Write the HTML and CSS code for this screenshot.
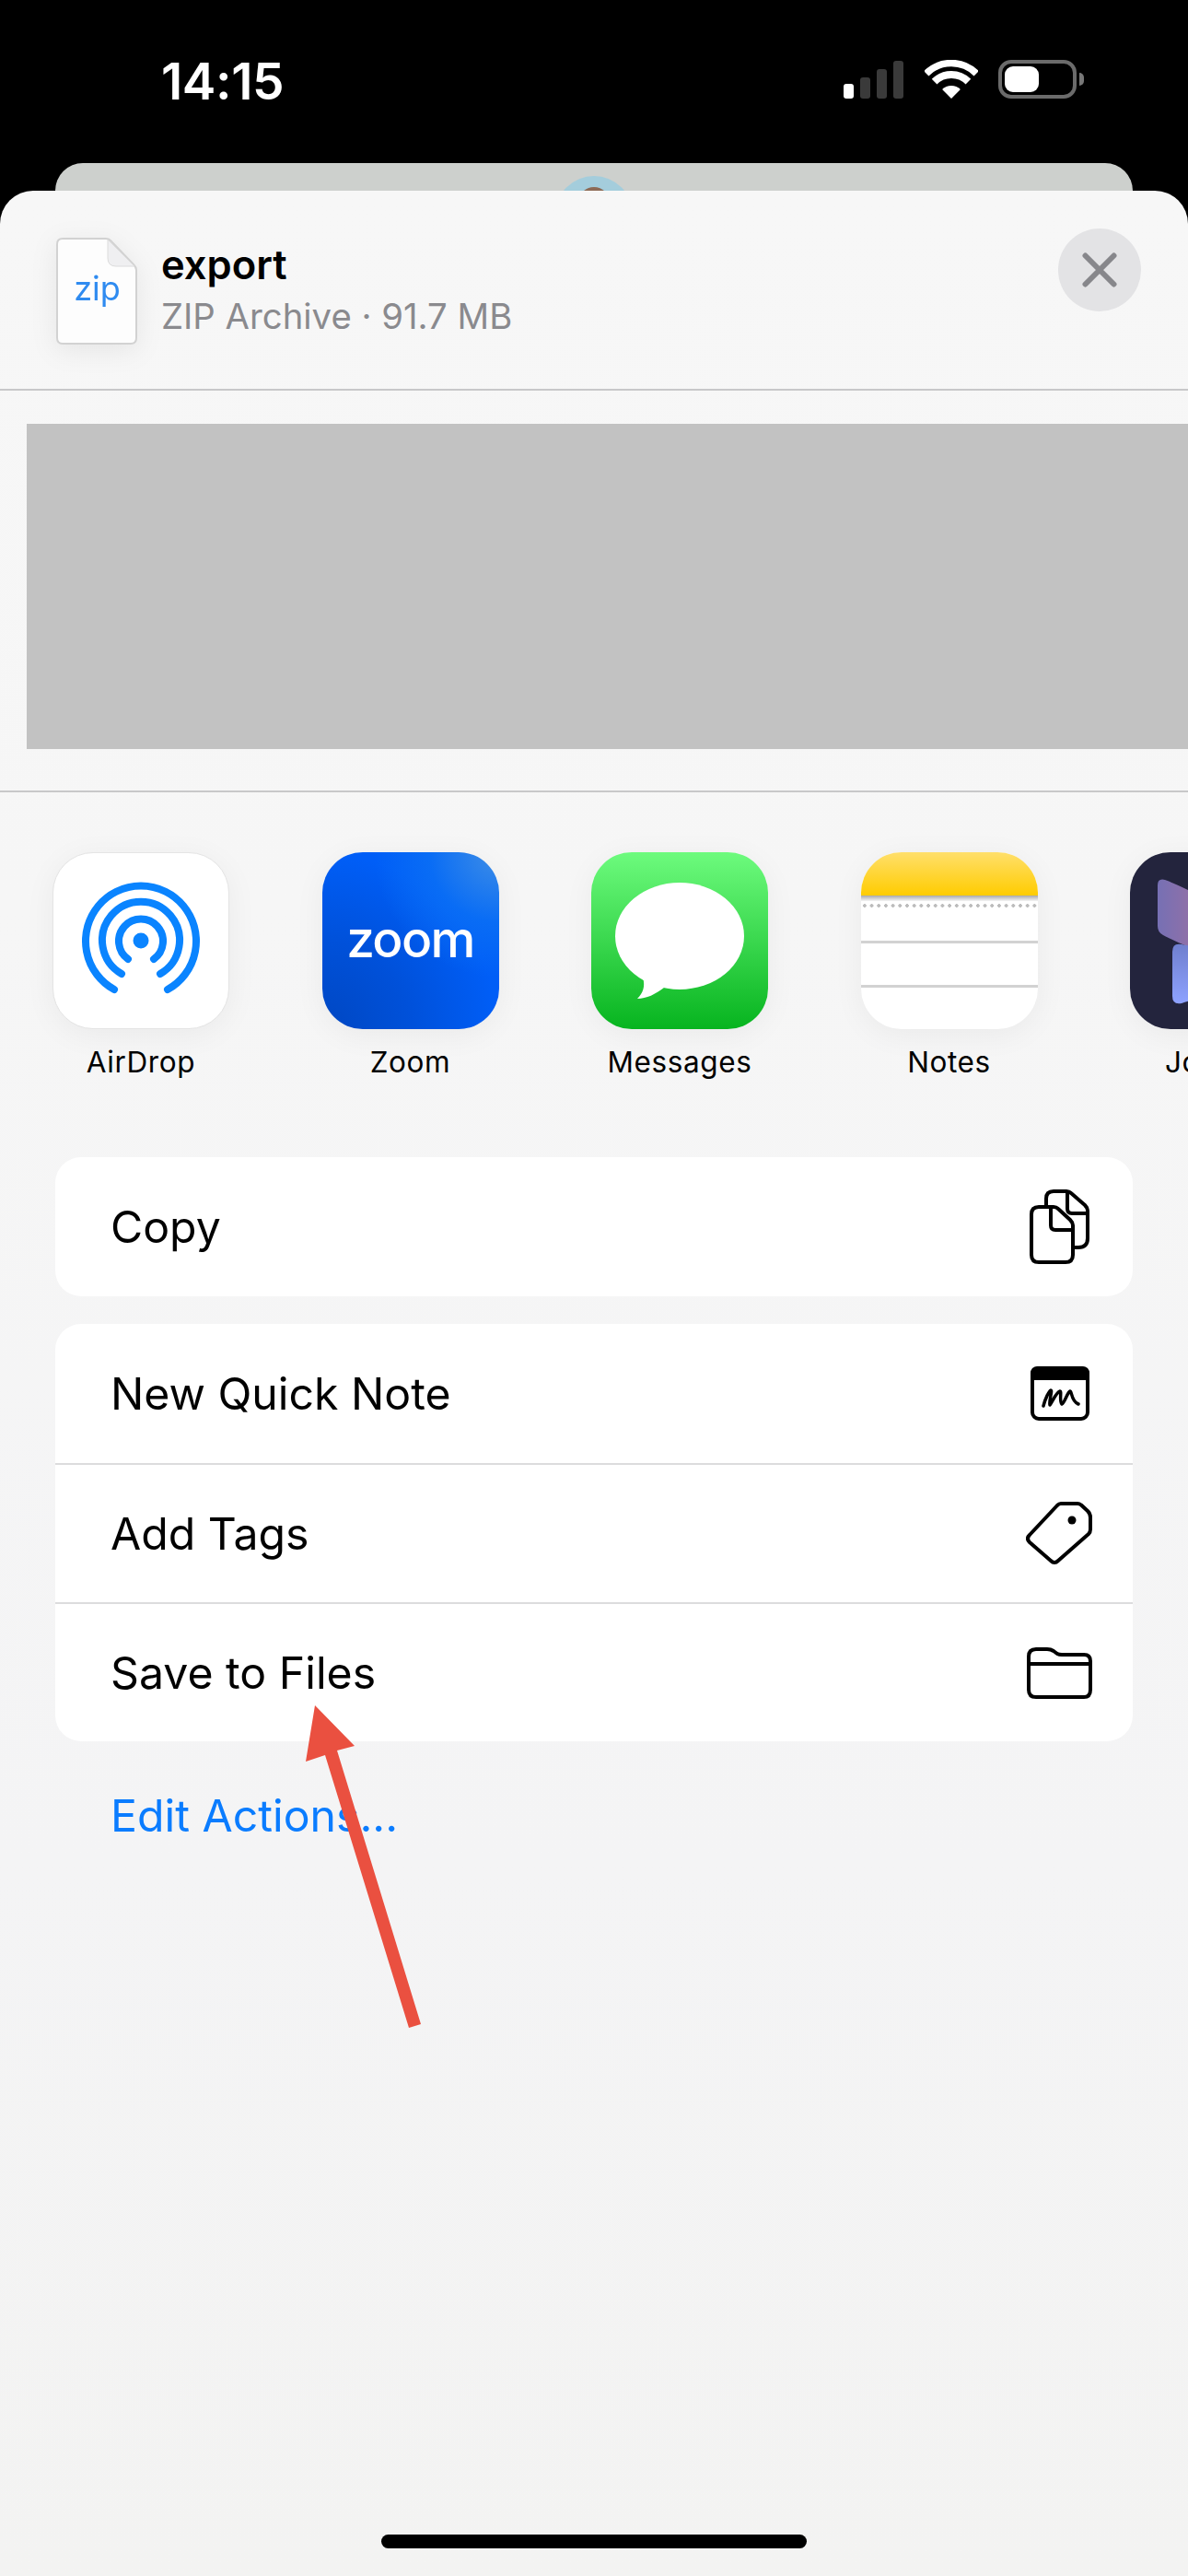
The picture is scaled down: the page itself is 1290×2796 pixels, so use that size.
FILE: index.html
```html
<!DOCTYPE html>
<html lang="en">
<head>
<meta charset="utf-8">
<title>Share sheet</title>
<link rel="stylesheet" href="styles.css">
</head>
<body>
<div class="phone">
  <header class="status">
    <span class="time">14:15</span>
    <div class="status-icons">
      <div class="signal">
        <i class="bar bar-1"></i><i class="bar bar-2"></i><i class="bar bar-3"></i><i class="bar bar-4"></i>
      </div>
      <svg class="wifi" width="58" height="42" viewBox="0 0 58 42">
        <path d="M1.8 14.8A38.5 38.5 0 0 1 56.2 14.8" fill="none" stroke="#fff" stroke-width="7.5"/>
        <path d="M10.6 23.6A26 26 0 0 1 47.4 23.6" fill="none" stroke="#fff" stroke-width="8"/>
        <path d="M19.1 32.1A14 14 0 0 1 38.9 32.1L29 42Z" fill="#fff"/>
      </svg>
      <div class="battery">
        <div class="battery-body"><i class="battery-fill"></i></div>
        <i class="battery-nub"></i>
      </div>
    </div>
  </header>

  <div class="back-card">
    <div class="avatar"><i class="avatar-head"></i></div>
  </div>

  <main class="sheet">
    <section class="file-head">
      <svg class="file-icon" width="88" height="116" viewBox="0 0 88 116">
        <path d="M7 1H54Q57 1 59 3L84 29Q87 32 87 35V109Q87 115 81 115H7Q1 115 1 109V7Q1 1 7 1Z" fill="#fdfdfd" stroke="#d2d2d2" stroke-width="2"/>
        <path d="M56 2V22Q56 31 65 31H85Z" fill="#efeff1" stroke="#dcdcdc" stroke-width="1"/>
        <text class="zip-text" x="44.500" y="68" text-anchor="middle">zip</text>
      </svg>
      <div class="file-text">
        <div class="file-name">export</div>
        <div class="file-meta">ZIP Archive · 91.7 MB</div>
      </div>
      <button class="close" type="button" aria-label="Close">
        <svg width="38" height="38" viewBox="0 0 38 38"><path d="M3.500 3.500L34.500 34.500M34.500 3.500L3.500 34.500" stroke="#87878b" stroke-width="6" stroke-linecap="round"/></svg>
      </button>
    </section>

    <section class="preview"><div class="preview-box"></div></section>

    <section class="apps">
      <div class="app">
        <div class="app-icon airdrop">
          <svg width="190" height="190" viewBox="0 0 190 190" fill="none" stroke="#0a84ff" stroke-width="8" stroke-linecap="round">
            <path d="M66 148A60 60 0 1 1 124 148"/>
            <path d="M74 131A42 42 0 1 1 116 131"/>
            <path d="M81 115A24 24 0 1 1 109 115"/>
            <circle cx="95" cy="95" r="8.500" fill="#0a84ff" stroke="none"/>
          </svg>
        </div>
        <span class="app-label">AirDrop</span>
      </div>
      <div class="app">
        <div class="app-icon zoom"><span class="zoom-word">zoom</span></div>
        <span class="app-label">Zoom</span>
      </div>
      <div class="app">
        <div class="app-icon messages">
          <svg width="192" height="192" viewBox="0 0 192 192">
            <ellipse cx="96" cy="91" rx="70" ry="58" fill="#fff"/>
            <path d="M56 136C59 146 56 153 50 159C60 159 70 154 79 147Z" fill="#fff"/>
          </svg>
        </div>
        <span class="app-label">Messages</span>
      </div>
      <div class="app">
        <div class="app-icon notes">
          <div class="notes-head"></div>
          <div class="notes-shade"></div>
          <div class="notes-dots"></div>
          <div class="notes-line notes-line-first"></div>
          <div class="notes-line notes-line-second"></div>
        </div>
        <span class="app-label">Notes</span>
      </div>
      <div class="app">
        <div class="app-icon journal">
          <svg width="192" height="192" viewBox="0 0 192 192">
            <defs>
              <linearGradient id="wingTop" x1="0" y1="0" x2="1" y2="0" gradientUnits="objectBoundingBox">
                <stop offset="0" stop-color="#7670b4"/><stop offset="1" stop-color="#a5709e"/>
              </linearGradient>
              <linearGradient id="wingLow" x1="0" y1="0" x2="0" y2="1">
                <stop offset="0" stop-color="#6f7fce"/><stop offset="1" stop-color="#8ea2ff"/>
              </linearGradient>
            </defs>
            <path d="M30 36Q30 28 38 30Q66 40 96 62V114Q62 104 36 90Q30 87 30 80Z" fill="url(#wingTop)"/>
            <path d="M46 108Q46 98 56 100Q80 104 96 114V150Q76 158 56 164Q46 166 46 156Z" fill="url(#wingLow)"/>
          </svg>
        </div>
        <span class="app-label">Journal</span>
      </div>
    </section>

    <section class="actions">
      <div class="card">
        <div class="row">
          <span>Copy</span>
          <svg class="row-icon row-icon-inset" width="65" height="81" viewBox="0 0 65 81" fill="none" stroke="#000" stroke-width="4" stroke-linejoin="round">
            <path d="M18 17V10Q18 2 26 2H40Q43 2 45 4L60 17Q63 20 63 23V53Q63 63 53 63H49"/>
            <path d="M41 3V21Q41 26 46 26H62"/>
            <path d="M10 19H26Q29 19 31 21L44 33Q47 36 47 39V71Q47 79 39 79H10Q2 79 2 71V27Q2 19 10 19Z"/>
            <path d="M23 20V39Q23 44 28 44H46"/>
          </svg>
        </div>
      </div>
      <div class="card">
        <div class="row">
          <span>New Quick Note</span>
          <svg class="row-icon row-icon-inset" width="64" height="59" viewBox="0 0 64 59" fill="none" stroke="#000" stroke-width="4">
            <rect x="2" y="2" width="60" height="55" rx="7"/>
            <path d="M0 8Q0 0 8 0H56Q64 0 64 8V15H0Z" fill="#000" stroke="none"/>
            <path d="M14 43C16 35 20 27 22 26C24 26 20 37 21 42C24 38 28 28 32 27C34 27 31 38 34 41C37 40 40 28 43 27C45 27 44 38 52 41" stroke-width="3.500" stroke-linecap="round" stroke-linejoin="round"/>
          </svg>
        </div>
        <div class="row row-split">
          <span>Add Tags</span>
          <svg class="row-icon" width="72" height="71" viewBox="0 0 72 71" fill="none" stroke="#000" stroke-width="4" stroke-linejoin="round">
            <path d="M38 3H56Q58 3 60 4.500L67 11Q70 14 70 18V31Q70 34 68 36L35 65Q31 69 27 65L4 45Q0 41 4 37L34 5Q36 3 38 3Z"/>
            <circle cx="50" cy="21" r="4.500" fill="#000" stroke="none"/>
          </svg>
        </div>
        <div class="row row-split">
          <span>Save to Files</span>
          <svg class="row-icon" width="71" height="56" viewBox="0 0 71 56" fill="none" stroke="#000" stroke-width="4" stroke-linejoin="round">
            <path d="M2 10Q2 2 10 2H22Q26 2 29 4L33 7Q35 8 38 8H62Q69 8 69 15V46Q69 54 62 54H10Q2 54 2 46Z"/>
            <path d="M2 18H69"/>
          </svg>
        </div>
      </div>
      <a class="edit-link">Edit Actions...</a>
    </section>
    <div class="home-bar"></div>
  </main>

  <svg class="arrow" width="130" height="360" viewBox="0 0 130 360">
    <polygon points="12,1 2,62 23,55 114,351 127,347 36,50 55,45" fill="#ea5040"/>
  </svg>
</div>
</body>
</html>
```

FILE: styles.css
```css
* { box-sizing: border-box; }

html, body { margin: 0; padding: 0; }

body {
  width: 1290px;
  height: 2796px;
  overflow: hidden;
  background: #000;
  font-family: Inter, "Liberation Sans", sans-serif;
  color: #000;
}

.phone {
  position: relative;
  width: 1290px;
  height: 2796px;
  overflow: hidden;
  background: #000;
}

/* Status bar */
.status {
  height: 177px;
  display: flex;
  justify-content: space-between;
  padding: 61px 113px 0 175px;
  color: #fff;
}

.time {
  font-size: 55px;
  font-weight: 600;
  line-height: 54px;
  letter-spacing: -0.4px;
}

.status-icons {
  display: flex;
  align-items: flex-start;
  margin-top: 4px;
}

.signal {
  display: flex;
  align-items: flex-end;
  gap: 7px;
  height: 42px;
  margin-right: 23px;
}

.bar {
  display: block;
  width: 11px;
  border-radius: 3px;
  background: #3a3a3a;
}
.bar-1 { height: 16px; background: #fff; }
.bar-2 { height: 23px; }
.bar-3 { height: 32px; }
.bar-4 { height: 41px; }

.wifi { margin-right: 22px; }

.battery { display: flex; align-items: center; height: 42px; }

.battery-body {
  width: 85px;
  height: 42px;
  padding: 3px;
  border: 4px solid #6b6b6b;
  border-radius: 14px;
}

.battery-fill {
  display: block;
  width: 37px;
  height: 28px;
  border-radius: 9px;
  background: #fff;
}

.battery-nub {
  display: block;
  width: 5px;
  height: 14px;
  margin-left: 3px;
  border-radius: 0 7px 7px 0;
  background: #777;
}

/* Page peeking out behind the sheet */
.back-card {
  display: flex;
  justify-content: center;
  height: 30px;
  margin: 0 60px;
  padding-top: 14px;
  overflow: hidden;
  border-radius: 30px 30px 0 0;
  background: #cdd0cd;
}

.avatar {
  flex: none;
  display: flex;
  justify-content: center;
  width: 84px;
  height: 84px;
  padding-top: 12px;
  border-radius: 50%;
  background: #a4cddc;
}

.avatar-head {
  display: block;
  width: 34px;
  height: 34px;
  border-radius: 50%;
  background: #8d6a55;
}

/* Sheet */
.sheet {
  height: 2589px;
  overflow: hidden;
  border-radius: 36px 36px 0 0;
  background: linear-gradient(#f7f7f7 0, #f6f6f6 30%, #f4f4f5 70%, #f3f3f2 100%);
}

.file-head {
  display: flex;
  align-items: flex-start;
  height: 217px;
  padding-left: 61px;
  border-bottom: 2px solid #c8c8c9;
}

.file-icon {
  flex: none;
  margin-top: 51px;
  filter: drop-shadow(0 6px 14px rgba(0, 0, 0, 0.07));
}

.zip-text {
  font-family: Inter, sans-serif;
  font-size: 36px;
  fill: #2f8bf0;
}

.file-text { margin: 55px 0 0 26px; flex: 1; }

.file-name {
  font-size: 43.5px;
  font-weight: 600;
  line-height: 50px;
}

.file-meta {
  margin-top: 9px;
  font-size: 38.3px;
  line-height: 44px;
  color: #8a8a8e;
}

.close {
  flex: none;
  display: flex;
  align-items: center;
  justify-content: center;
  width: 90px;
  height: 90px;
  margin: 41px 51px 0 0;
  padding: 0;
  border: 0;
  border-radius: 50%;
  background: #e3e3e5;
}

.preview {
  height: 436px;
  padding: 36px 0 0 29px;
  border-bottom: 2px solid #c8c8c9;
}

.preview-box { height: 353px; background: #c2c2c2; }

/* App row */
.apps {
  display: flex;
  gap: 100.5px;
  height: 396px;
  padding: 65px 0 0 57px;
  overflow: hidden;
}

.app {
  flex: none;
  display: flex;
  flex-direction: column;
  align-items: center;
  width: 192px;
}

.app-icon {
  width: 192px;
  height: 192px;
  overflow: hidden;
  border-radius: 44px;
  box-shadow: 0 6px 34px rgba(0, 0, 0, 0.05);
}

.app-label {
  margin-top: 16px;
  font-size: 31.5px;
  line-height: 40px;
  letter-spacing: 0.6px;
  white-space: nowrap;
}

.airdrop { border: 1px solid #e4e4e4; background: #fff; }

.zoom {
  display: flex;
  align-items: center;
  justify-content: center;
  padding-bottom: 5px;
  background:
    radial-gradient(circle at 100% 0, #3f8ee6 0, rgba(10, 110, 245, 0.9) 28%, rgba(0, 99, 248, 0) 50%),
    radial-gradient(circle at 0 100%, #0047c2 0, rgba(0, 75, 205, 0.7) 35%, rgba(0, 85, 235, 0) 70%),
    #005ef7;
}

.zoom-word {
  font-size: 55px;
  font-weight: 500;
  line-height: 60px;
  letter-spacing: -1.6px;
  color: #fff;
}

.messages { background: linear-gradient(#6dfb7d, #07b41f); }

.notes { background: #fff; }

.notes-head { height: 47px; background: linear-gradient(#ffdf6b, #ffcc00); }

.notes-shade { height: 6px; background: linear-gradient(#a9a9a9, #f4f4f4); }

.notes-dots {
  height: 4px;
  margin-top: 3px;
  background: radial-gradient(circle at center, #bcbcbc 1.6px, transparent 2px) 0 0 / 7.7px 4px repeat-x;
}

.notes-line { height: 3px; background: #d2d2d2; }
.notes-line-first { margin-top: 36px; }
.notes-line-second { margin-top: 45px; }

.journal { background: #23243d; }

/* Action cards */
.actions {
  display: flex;
  flex-direction: column;
  gap: 30px;
  padding: 0 60px;
}

.card {
  overflow: hidden;
  border-radius: 28px;
  background: #fff;
}

.row {
  display: flex;
  align-items: center;
  justify-content: space-between;
  height: 151px;
  padding: 0 44px 0 60px;
  font-size: 48.2px;
  line-height: 60px;
}

.row-split { border-top: 2px solid #dcdcdd; }

.row-icon { flex: none; }

.row-icon-inset { margin-right: 3px; }

.edit-link {
  display: block;
  margin-top: 21px;
  padding-left: 60px;
  font-size: 48.2px;
  line-height: 60px;
  color: #0a7cff;
}

.home-bar {
  width: 462px;
  height: 15px;
  margin: 750px auto 0;
  border-radius: 8px;
  background: #000;
}

/* Annotation drawn over the screenshot */
.arrow {
  position: absolute;
  left: 330px;
  top: 1850px;
}
```
